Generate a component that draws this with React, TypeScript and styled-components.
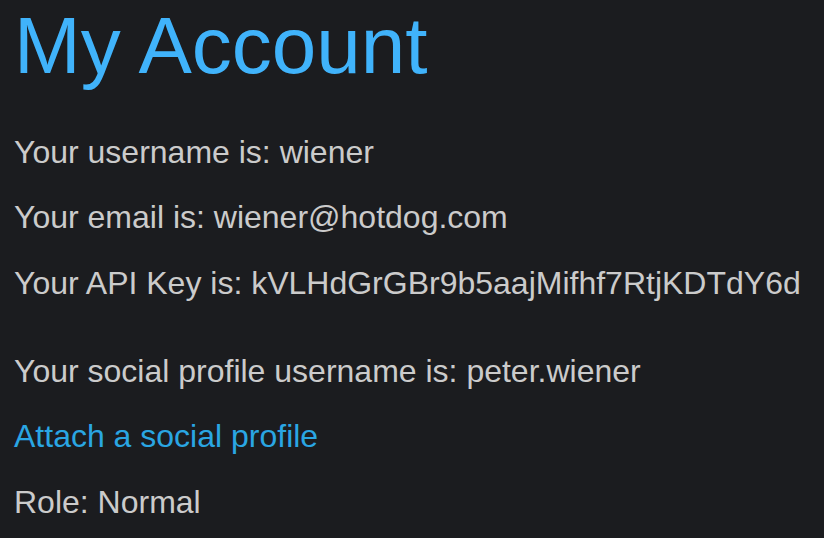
import styled, { createGlobalStyle } from 'styled-components';

const REM = 32;

const GlobalStyle = createGlobalStyle`
  html, body {
    margin: 0;
    padding: 0;
    background-color: #1b1c1f;
  }
  body {
    font-family: 'Liberation Sans', Arial, sans-serif;
  }
`;

const Container = styled.div`
  background-color: #1b1c1f;
  color: #cbcbcb;
  font-family: 'Liberation Sans', Arial, sans-serif;
  font-size: ${REM}px;
  width: 824px;
  height: 538px;
  padding: 0 0 0 14px;
  box-sizing: border-box;
  overflow: hidden;
`;

const Title = styled.h1`
  font-size: 2.5em;
  font-weight: 400;
  line-height: 91px;
  color: #40b3fb;
  margin: 0 0 42.5px 0;
`;

const Details = styled.div`
  display: flex;
  flex-direction: column;
  gap: 28.5px;
`;

const Line = styled.p<{ $spaced?: boolean }>`
  margin: ${(props) => (props.$spaced ? '22.5px' : '0')} 0 0 0;
  line-height: 37px;
`;

const Link = styled.a`
  color: #2aa6e3;
  text-decoration: none;
  cursor: pointer;
`;

export default function App() {
  return (
    <>
      <GlobalStyle />
      <Container>
        <Title>My Account</Title>
        <Details>
          <Line>Your username is: wiener</Line>
          <Line>Your email is: wiener@hotdog.com</Line>
          <Line>Your API Key is: kVLHdGrGBr9b5aajMifhf7RtjKDTdY6d</Line>
          <Line $spaced>Your social profile username is: peter.wiener</Line>
          <Line>
            <Link href="#">Attach a social profile</Link>
          </Line>
          <Line>Role: Normal</Line>
        </Details>
      </Container>
    </>
  );
}
